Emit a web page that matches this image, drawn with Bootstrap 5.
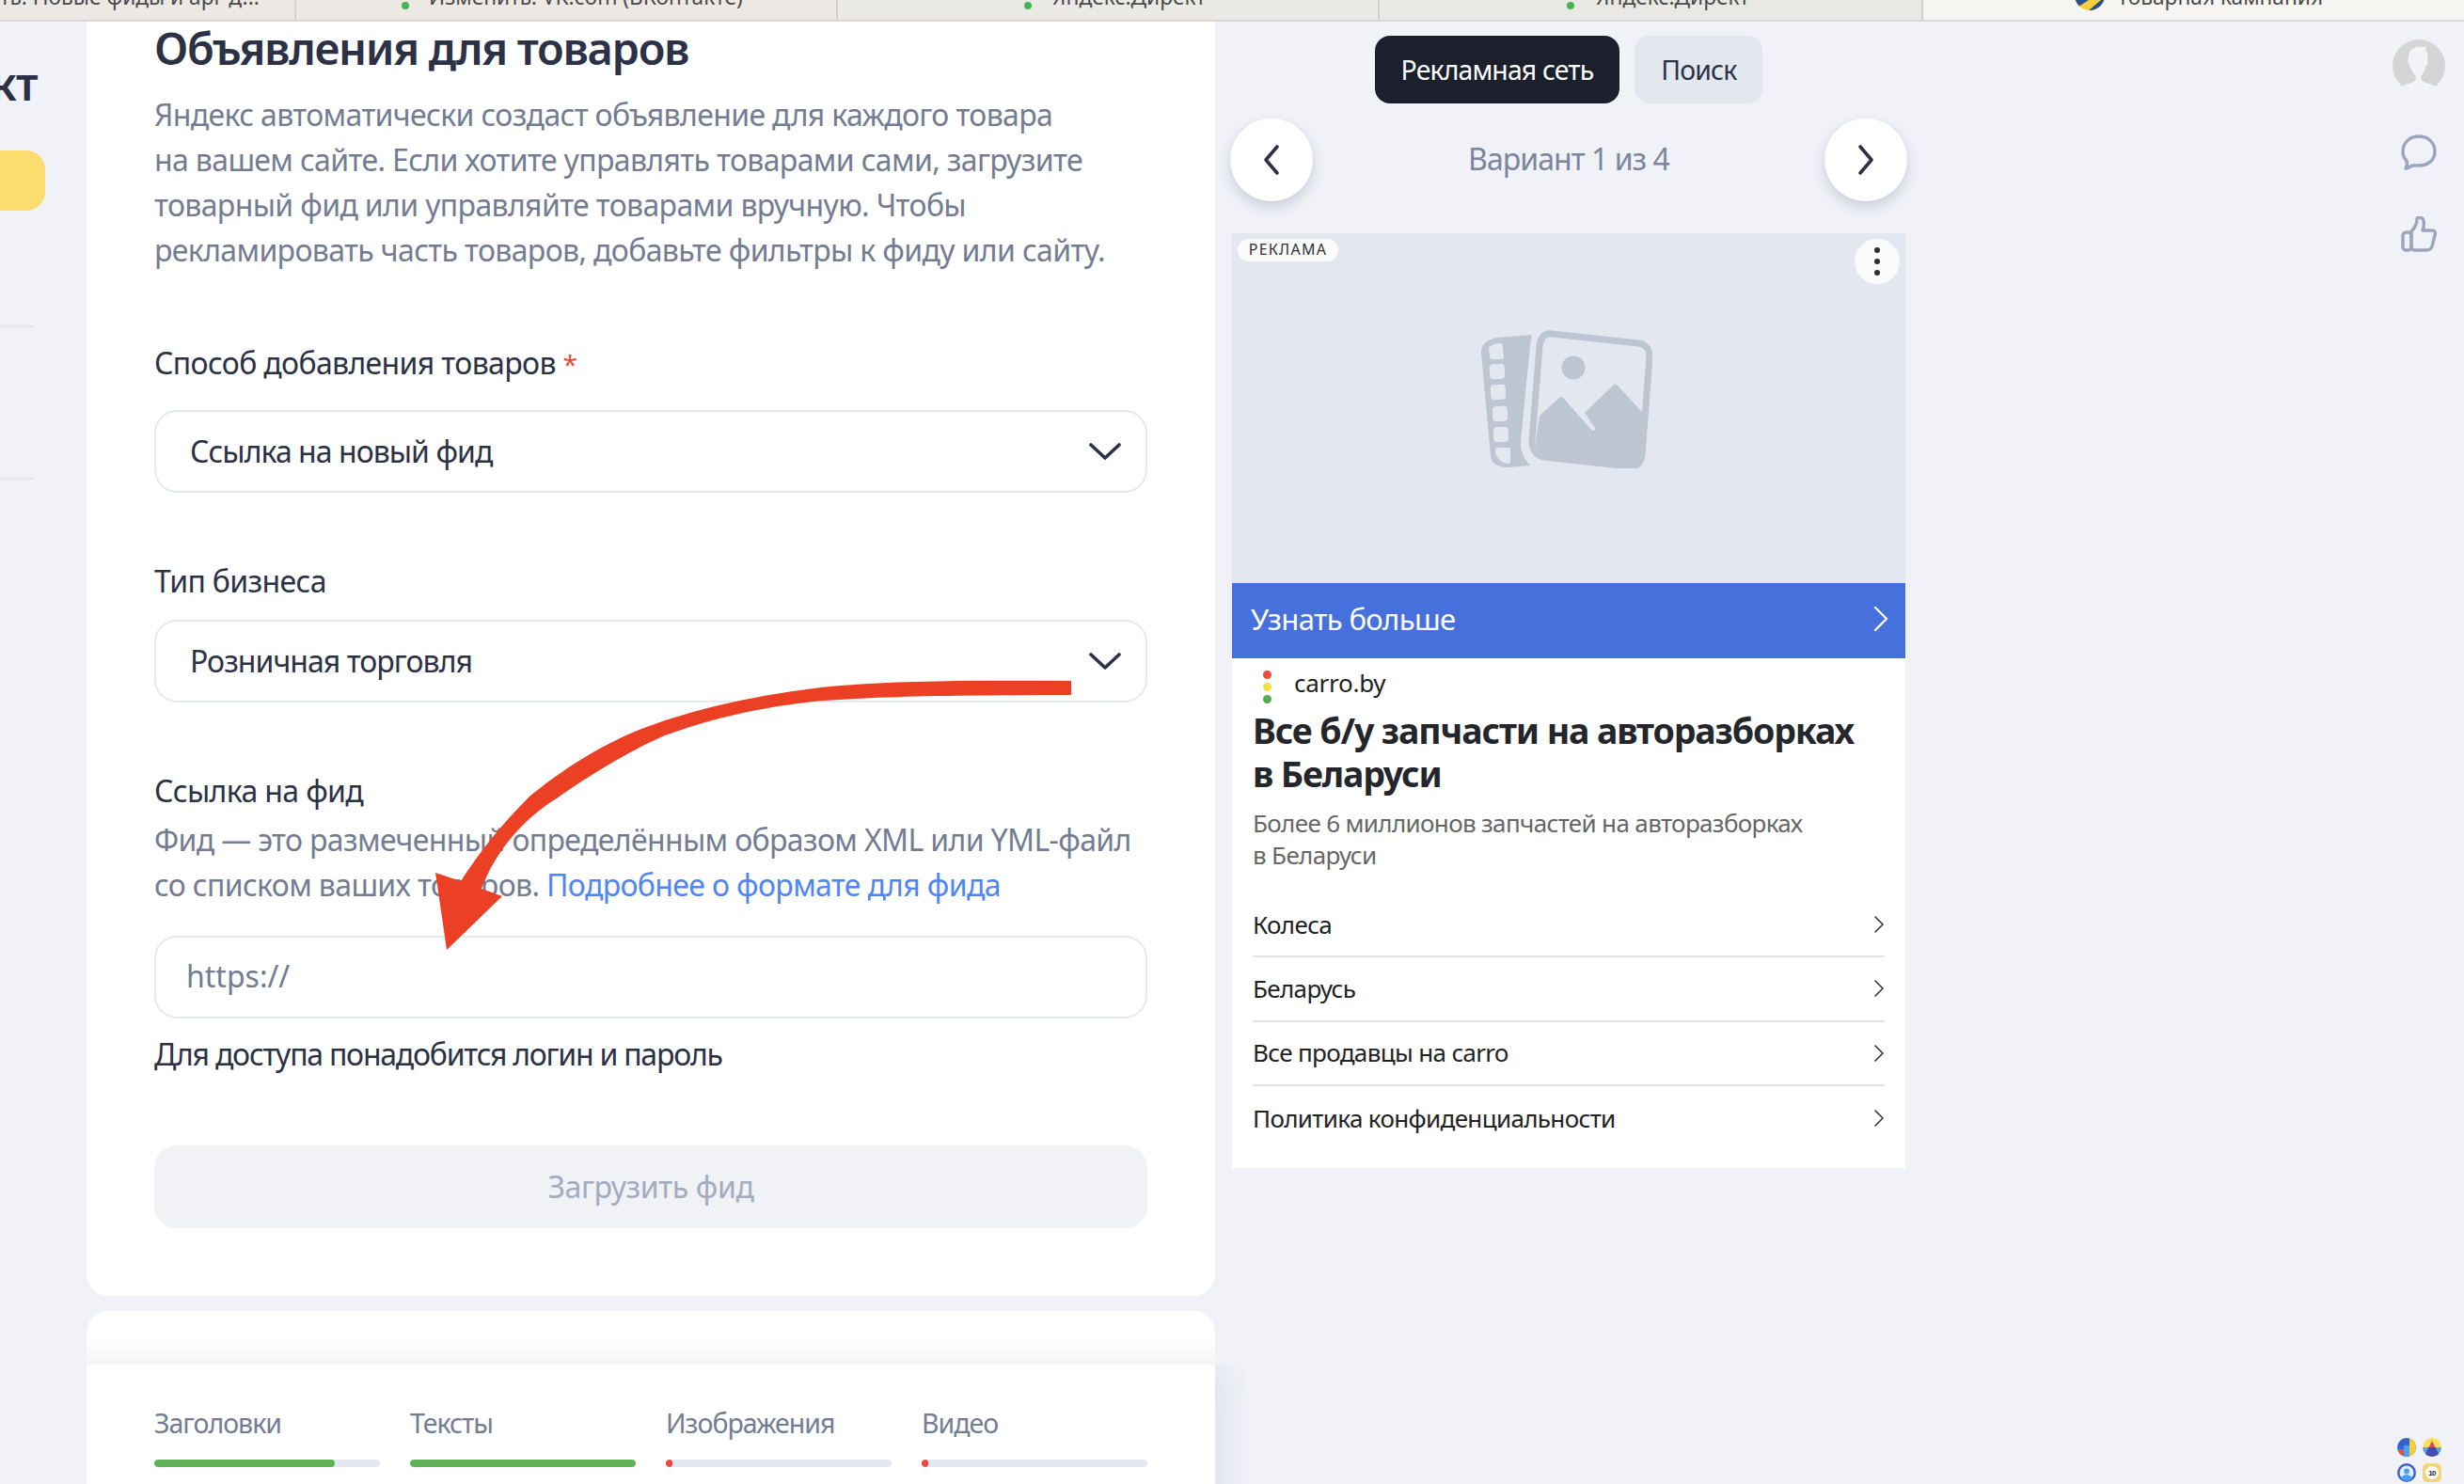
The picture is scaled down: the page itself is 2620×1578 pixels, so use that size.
<!DOCTYPE html>
<html lang="ru">
<head>
<meta charset="utf-8">
<title>Товарная кампания</title>
<link href="https://cdn.jsdelivr.net/npm/bootstrap@5.3.0/dist/css/bootstrap.min.css" rel="stylesheet">
<style>
html,body{height:100%;overflow:hidden}
body{background:#f0f2f7;font-family:"Noto Sans","Liberation Sans",sans-serif;color:#2c3145;letter-spacing:-.04em;position:relative}
.tabbar{height:23px;background:#ece9e5;border-bottom:2px solid #d9d8d6;overflow:hidden;font-size:22.700px;color:#4b4b4b;letter-spacing:0}
.tabitem{height:21px;overflow:hidden;border-right:2px solid #d3d1cd;white-space:nowrap;line-height:30px}
.tabitem span.lbl{display:block;margin-top:-18px}
.tab0{width:315px;padding-left:0;text-align:right;padding-right:63px}
.tab1{width:576px;padding-left:141px}
.tab2{width:576px;padding-left:228px;background:#eceae6}
.tab3{width:578px;padding-left:230px;background:#e9e8e4}
.tab4{flex:1;padding-left:206px;background:#f7f5f1;border-right:0}
.gdot{position:absolute;top:2px;width:8px;height:8px;border-radius:50%;background:#46b450}
.workspace{height:calc(100% - 23px)}
.siderail{width:92px;flex:none;overflow:hidden;position:relative}
.sidehead{font-size:48px;font-weight:600;line-height:56px;margin-top:38px;padding-right:52px;white-space:nowrap}
.sideyellow{width:48px;height:64px;background:#fbdd6f;border-radius:0 20px 20px 0;margin-top:43px}
.sideline{width:36px;height:2px;background:#e5e7ed}
.mainbox{width:1200px;flex:none}
.sheet{border:0;background:#fff;border-radius:0 0 24px 24px;padding:0 72px 72px}
.sheet h2{font-size:47px;line-height:56px;font-weight:600;margin:0 0 19px;letter-spacing:-.028em}
.muted1{color:#747c93}
.body32{font-size:32px;line-height:48px}
.lab32{font-size:32px;line-height:48px;color:#2c3145}
.form-select.fld,.form-control.fld{height:88px;border:2px solid #e6e9f0;border-radius:24px;font-size:32px;color:#2c3145;padding:0 80px 0 36px;box-shadow:none;letter-spacing:-.03em;background-color:#fff}
.form-select.fld{background-position:right 26px center;background-size:34px 20px;background-image:url("data:image/svg+xml,%3Csvg xmlns='http://www.w3.org/2000/svg' viewBox='0 0 34 20'%3E%3Cpath d='M2 3l15 14L32 3' fill='none' stroke='%232c3145' stroke-width='3.6' stroke-linecap='round' stroke-linejoin='round'/%3E%3C/svg%3E")}
.form-control.fld{padding:0 32px 3px;letter-spacing:0}
.form-control.fld::placeholder{color:#747c93;opacity:1}
.star1{color:#e8493a;font-size:28px}
.gap72{margin-top:72px}
.hint1{letter-spacing:-.0385em}
.lnk{color:#4f86f7;text-decoration:none}
.btn.loadbtn{height:88px;width:100%;background:#f0f2f6;border:0;border-radius:24px;color:#a3abc0;font-size:32px;opacity:1;letter-spacing:-.012em;margin-top:73px}
.sheet2{border:0;margin-top:16px;border-radius:24px 24px 0 0;background:#fff;overflow:visible;flex:1}
.fadeband{height:57px;background:linear-gradient(#fff 55%,#f5f5f6);border-radius:24px 24px 0 0}
.stats{background:#fff;padding:42px 72px 0;box-shadow:0 0 40px rgba(120,130,160,.22);clip-path:inset(0 -40px -40px 0);height:200px}
.statlab{font-size:28.500px;line-height:40px;color:#747c93;margin-bottom:19px;letter-spacing:-.035em}
.progress.stbar{height:8px;background:#e3e7ef;border-radius:4px}
.stbar .progress-bar.gr{background:#5cb255;border-radius:4px}
.stbar .progress-bar.rd{background:#f0453a;border-radius:4px}
.previewcol{width:720px;flex:none;margin-left:16px;padding-top:15px}
.btn.segbtn{height:72px;border:0;border-radius:16px;font-size:28.400px;padding:0 28px;letter-spacing:-.03em;line-height:70px}
.segdark{background:#1c202c;color:#fff}
.btn.segdark:hover{background:#1c202c;color:#fff}
.seglight{background:#e3e7ef;color:#2c3145}
.btn.roundbtn{width:88px;height:88px;border-radius:50%;background:#fff;border:0;box-shadow:0 6px 14px rgba(100,110,140,.28);padding:0}
.varlab{font-size:32px;color:#7c859c;margin-bottom:2px;letter-spacing:-.03em}
.adbox{margin:34px 2px 0;background:#fff;width:716px}
.adpic{height:372px;background:#e3e7ef;position:relative}
.adtag{position:absolute;left:6px;top:6px;height:24px;width:107px;background:#fbfbfc;border-radius:12px;font-size:16px;line-height:23px;text-align:center;letter-spacing:.08em;color:#333}
.admore{position:absolute;right:6px;top:6px;width:48px;height:48px;border-radius:50%;background:#fafafb}
.ctabar{height:80px;background:#4670dc;color:#fff;font-size:31px;padding:0 18px 4px 20px}
.favrow{height:34px;padding-left:33px;margin-top:9px;font-size:26px;color:#222;letter-spacing:-.01em}
.favdots{width:10px;margin-right:23px;margin-top:8px}
.favdots i{display:block;width:9px;height:9px;border-radius:50%;margin-bottom:4px}
.adtitle{font-size:37.500px;line-height:46px;font-weight:700;color:#24262b;margin:11px 22px 0;letter-spacing:-.03em}
.addesc{font-size:26px;line-height:34px;color:#666;margin:12px 22px 0;letter-spacing:-.025em}
.adlist{margin:24px 22px 0}
.adlist .list-group-item{height:68.300px;padding:0;border-color:#e3e3e3;border-width:0 0 2px;font-size:26px;color:#222;letter-spacing:-.025em;background:transparent}
.adlist .list-group-item:last-child{border-width:0}
.adspace{height:19px}
.rightrail{width:56px;margin-right:20px;margin-left:auto;flex:none;padding-bottom:2px}
.avatar{margin-top:19px;width:56px;height:56px}
.ic1{margin-top:45px}
.ic2{margin-top:49px}
.minigrid{margin-top:auto;display:grid;grid-template-columns:20px 20px;gap:7px;justify-content:center}
.arrowlay{position:absolute;left:0;top:0;pointer-events:none}
</style>
</head>
<body>
<div class="tabbar d-flex">
  <div class="tabitem tab0"><span class="lbl">ть: Новые фиды и арг д...</span></div>
  <div class="tabitem tab1"><span class="lbl">Изменить: VK.com (ВКонтакте)</span></div>
  <div class="tabitem tab2"><span class="lbl">Яндекс.Директ</span></div>
  <div class="tabitem tab3"><span class="lbl">Яндекс.Директ</span></div>
  <div class="tabitem tab4"><span class="lbl">Товарная кампания</span></div>
</div>
<span class="gdot" style="left:427px"></span>
<span class="gdot" style="left:1089px"></span>
<span class="gdot" style="left:1666px"></span>
<svg class="arrowlay" width="32" height="12" style="left:2206px" viewBox="0 0 32 12"><defs><clipPath id="shc"><circle cx="16" cy="-5" r="16"/></clipPath></defs><g clip-path="url(#shc)"><rect x="0" y="-22" width="32" height="34" fill="#f6cf3c"/><path d="M0 0h15L4 7zM14 12L28 0h4v12z" fill="#27508c"/></g></svg>

<div class="workspace d-flex">
  <aside class="siderail">
    <div class="sidehead d-flex justify-content-end">Проект</div>
    <div class="sideyellow"></div>
    <div class="sideline" style="margin-top:122px"></div>
    <div class="sideline" style="margin-top:160px"></div>
  </aside>

  <main class="mainbox d-flex flex-column">
    <section class="card sheet">
      <h2>Объявления для товаров</h2>
      <p class="body32 muted1 mb-0">Яндекс автоматически создаст объявление для каждого товара<br>на вашем сайте. Если хотите управлять товарами сами, загрузите<br>товарный фид или управляйте товарами вручную. Чтобы<br>рекламировать часть товаров, добавьте фильтры к фиду или сайту.</p>

      <label class="form-label lab32 gap72 mb-0 d-block">Способ добавления товаров <span class="star1">*</span></label>
      <select class="form-select fld" style="margin-top:25px"><option>Ссылка на новый фид</option></select>

      <label class="form-label lab32 mb-0 d-block" style="margin-top:70px">Тип бизнеса</label>
      <select class="form-select fld" style="margin-top:17px"><option>Розничная торговля</option></select>

      <label class="form-label lab32 mb-0 d-block" style="margin-top:70px">Ссылка на фид</label>
      <p class="body32 muted1 mb-0" style="margin-top:4px">Фид — это размеченный определённым образом XML или YML-файл<br>со списком ваших товаров. <a class="lnk" href="#">Подробнее о формате для фида</a></p>
      <input class="form-control fld" style="margin-top:30px" placeholder="https://">
      <div class="lab32 hint1" style="margin-top:14px">Для доступа понадобится логин и пароль</div>
      <button class="btn loadbtn" disabled>Загрузить фид</button>
    </section>

    <section class="card sheet2">
      <div class="fadeband"></div>
      <div class="stats row g-0 gx-0 d-flex" style="gap:32px">
        <div class="col"><div class="statlab">Заголовки</div><div class="progress stbar"><div class="progress-bar gr" style="width:80%"></div></div></div>
        <div class="col"><div class="statlab">Тексты</div><div class="progress stbar"><div class="progress-bar gr" style="width:100%"></div></div></div>
        <div class="col"><div class="statlab">Изображения</div><div class="progress stbar"><div class="progress-bar rd" style="width:3%"></div></div></div>
        <div class="col"><div class="statlab">Видео</div><div class="progress stbar"><div class="progress-bar rd" style="width:3%"></div></div></div>
      </div>
    </section>
  </main>

  <div class="previewcol">
    <div class="d-flex justify-content-center gap-3">
      <button class="btn segbtn segdark">Рекламная сеть</button>
      <button class="btn segbtn seglight">Поиск</button>
    </div>
    <div class="d-flex justify-content-between align-items-center" style="margin-top:16px">
      <button class="btn roundbtn"><svg width="20" height="34" viewBox="0 0 20 34"><path d="M16 3L4 17l12 14" fill="none" stroke="#2c3145" stroke-width="3.6" stroke-linecap="round" stroke-linejoin="round"/></svg></button>
      <span class="varlab">Вариант 1 из 4</span>
      <button class="btn roundbtn"><svg width="20" height="34" viewBox="0 0 20 34"><path d="M4 3l12 14L4 31" fill="none" stroke="#2c3145" stroke-width="3.6" stroke-linecap="round" stroke-linejoin="round"/></svg></button>
    </div>
    <article class="adbox">
      <div class="adpic d-flex">
        <span class="adtag">РЕКЛАМА</span>
        <span class="admore d-flex align-items-center justify-content-center"><svg width="8" height="32" viewBox="0 0 8 32"><circle cx="4" cy="4" r="3" fill="#2c2c2c"/><circle cx="4" cy="16" r="3" fill="#2c2c2c"/><circle cx="4" cy="28" r="3" fill="#2c2c2c"/></svg></span>
        <svg width="182" height="147" viewBox="0 0 182 147" style="margin:103px 0 0 265px">
          <path d="M54 5L17 8C6 10 0 15 0 24l10 110c1 8 8 12 18 12l24-2c-7-8-11-16-10-26l10-102z" fill="#bdc4d2"/>
          <g fill="#e3e7ef"><path d="M8 20c0-3 6-6 12-6 3 0 3 2 3 4l1 11c0 2-1 2-3 2h-9c-2 0-3-1-3-3z"/><rect x="9" y="36" width="16" height="16" rx="4" transform="rotate(-3 17 44)"/><rect x="10" y="58" width="16" height="16" rx="4" transform="rotate(-3 18 66)"/><rect x="12" y="81" width="16" height="16" rx="4" transform="rotate(-3 20 89)"/><rect x="13" y="103" width="16" height="16" rx="4" transform="rotate(-3 21 111)"/><path d="M15 128c0-2 1-3 3-3h11c2 0 2 1 2 3v12c0 2-1 2-2 2-7 0-14-6-14-14z"/></g>
          <path d="M75 4l92 10c8 1 12 7 12 14l-8 105c-1 8-6 13-14 12l-90-10c-7-1-13-7-13-16l8-103c1-8 5-13 13-12z" fill="none" stroke="#bdc4d2" stroke-width="7"/>
          <circle cx="98" cy="40" r="12.500" fill="#bdc4d2"/>
          <path d="M62 91l21-19c2-1 4-1 5 1l29 33c2 2 5 0 4-2l-11-16 30-29c2-2 3-2 5 0l26 28-2 44c-1 7-7 14-14 13l-84-9c-8-1-13-7-13-16z" fill="#bdc4d2"/>
        </svg>
      </div>
      <div class="ctabar d-flex align-items-center justify-content-between">
        <span>Узнать больше</span>
        <svg width="16" height="28" viewBox="0 0 16 28"><path d="M2 2l12 12L2 26" fill="none" stroke="#fff" stroke-width="2.400" stroke-linecap="round" stroke-linejoin="round"/></svg>
      </div>
      <div class="favrow d-flex align-items-center">
        <span class="favdots"><i style="background:#ea4f3c"></i><i style="background:#f8e13f"></i><i style="background:#4fb04f;margin-bottom:0"></i></span>
        <span>carro.by</span>
      </div>
      <div class="adtitle">Все б/у запчасти на авторазборках<br>в Беларуси</div>
      <div class="addesc">Более 6 миллионов запчастей на авторазборках<br>в Беларуси</div>
      <div class="list-group list-group-flush adlist">
        <div class="list-group-item d-flex align-items-center justify-content-between"><span>Колеса</span><svg width="12" height="20" viewBox="0 0 12 20"><path d="M2 2l8 8-8 8" fill="none" stroke="#333" stroke-width="1.600" stroke-linecap="round" stroke-linejoin="round"/></svg></div>
        <div class="list-group-item d-flex align-items-center justify-content-between"><span>Беларусь</span><svg width="12" height="20" viewBox="0 0 12 20"><path d="M2 2l8 8-8 8" fill="none" stroke="#333" stroke-width="1.600" stroke-linecap="round" stroke-linejoin="round"/></svg></div>
        <div class="list-group-item d-flex align-items-center justify-content-between"><span>Все продавцы на carro</span><svg width="12" height="20" viewBox="0 0 12 20"><path d="M2 2l8 8-8 8" fill="none" stroke="#333" stroke-width="1.600" stroke-linecap="round" stroke-linejoin="round"/></svg></div>
        <div class="list-group-item d-flex align-items-center justify-content-between"><span>Политика конфиденциальности</span><svg width="12" height="20" viewBox="0 0 12 20"><path d="M2 2l8 8-8 8" fill="none" stroke="#333" stroke-width="1.600" stroke-linecap="round" stroke-linejoin="round"/></svg></div>
      </div>
      <div class="adspace"></div>
    </article>
  </div>

  <div class="rightrail d-flex flex-column align-items-center">
    <svg class="avatar" viewBox="0 0 56 56"><defs><clipPath id="avc"><circle cx="28" cy="28" r="28"/></clipPath></defs><circle cx="28" cy="28" r="28" fill="#d5d5d5"/><g clip-path="url(#avc)" fill="#f3f4f7"><path d="M18 14c2-6 10-7 15-6l3-1-1 4c3 3 3 8 2 12l1 3-2 1c-1 5-3 9-6 12l1 5c3 2 9 3 15 6l6 8H4l6-8c6-3 11-4 14-6l1-5c-4-3-6-8-7-13l-2-2z"/></g></svg>
    <svg class="ic1" width="38" height="38" viewBox="0 0 38 38"><path d="M5 36c2-3 2-5 1-8C3 25 2 21 2 18 2 9 9 2 19 2s17 7 17 16-7 15-17 15c-3 0-5 0-7 0-2 1-4 3-7 3z" fill="none" stroke="#9ba5bb" stroke-width="3.400" stroke-linejoin="round"/></svg>
    <svg class="ic2" width="38" height="38" viewBox="0 0 38 38"><path d="M11 16C15 12 17 8 17 3c0-3 6-3 7 2 1 4 0 7-1 10h10c3 0 4 2 3 5l-3 12c-1 3-3 4-6 4H16c-3 0-5-1-5-4z" fill="none" stroke="#9ba5bb" stroke-width="3.400" stroke-linejoin="round"/><rect x="2" y="17" width="9" height="19" rx="3.500" fill="none" stroke="#9ba5bb" stroke-width="3.400"/></svg>
    <div class="minigrid">
      <svg width="20" height="20" viewBox="0 0 20 20"><circle cx="10" cy="10" r="10" fill="#3a61c8"/><path d="M13 .5a10 10 0 0 1 0 19z" fill="#f3cf3d"/><path d="M7 8h6v11.500a10 10 0 0 1-6 0z" fill="#4d9ef5"/><path d="M.5 12H7v7.500A10 10 0 0 1 .5 12z" fill="#e0524e"/></svg>
      <svg width="20" height="20" viewBox="0 0 20 20"><circle cx="10" cy="10" r="10" fill="#fbe05a"/><path d="M0 10h20a10 10 0 0 1-20 0z" fill="#5ba7ee"/><path d="M10 3l7 14a10 10 0 0 1-14 0z" fill="#e4455a"/><path d="M6.500 10h7L17 17a10 10 0 0 1-14 0z" fill="#3f4db5"/></svg>
      <svg width="20" height="20" viewBox="0 0 20 20"><circle cx="10" cy="10" r="10" fill="#3d5fcf"/><circle cx="10" cy="10" r="7.500" fill="#e6eefc"/><circle cx="10" cy="8.500" r="3" fill="#49a0f5"/><path d="M4 16c1-3 4-4 6-4s5 1 6 4a8 8 0 0 1-12 0z" fill="#49a0f5"/></svg>
      <svg width="20" height="20" viewBox="0 0 20 20"><rect width="20" height="20" rx="5" fill="#f2d57a"/><circle cx="10" cy="10" r="7" fill="#fff"/><text x="10" y="13" font-size="8" font-weight="700" text-anchor="middle" fill="#222" font-family="Liberation Sans">10</text></svg>
    </div>
  </div>
</div>

<svg class="arrowlay" width="1300" height="1100" viewBox="0 0 1300 1100">
  <path d="M1139 724C1040 723 930 724 865 732 800 740 730 755 670 780 625 800 590 825 563 847 540 870 515 898 490 937L463 928 475 1010 534 953 512 945C527 905 557 870 592 849 627 824 672 797 707 782 762 762 812 752 865 746 930 740 1040 739 1139 739z" fill="#ec4025"/>
</svg>
<script src="https://cdn.jsdelivr.net/npm/bootstrap@5.3.0/dist/js/bootstrap.bundle.min.js"></script>
</body>
</html>
